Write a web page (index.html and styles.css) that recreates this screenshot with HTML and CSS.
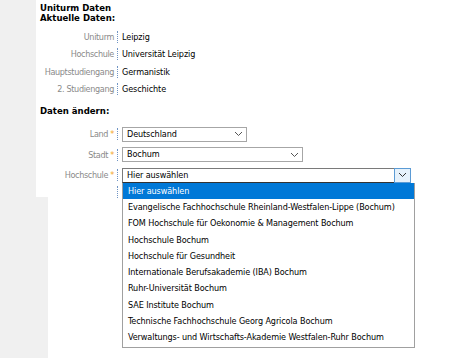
FILE: index.html
```html
<!DOCTYPE html>
<html lang="de">
<head>
<meta charset="utf-8">
<link rel="stylesheet" href="styles.css">
</head>
<body>
<div class="top">
  <div class="side"></div>
  <div class="content">
    <div class="h">Uniturm Daten</div>
    <div class="h">Aktuelle Daten:</div>
    <div class="info">
      <div class="row"><span class="lbl">Uniturm</span><span class="sep"></span><span class="val">Leipzig</span></div>
      <div class="row"><span class="lbl">Hochschule</span><span class="sep"></span><span class="val">Universität Leipzig</span></div>
      <div class="row"><span class="lbl">Hauptstudiengang</span><span class="sep"></span><span class="val">Germanistik</span></div>
      <div class="row"><span class="lbl">2. Studiengang</span><span class="sep"></span><span class="val">Geschichte</span></div>
    </div>
    <div class="h h2">Daten ändern:</div>
    <div class="form">
      <div class="frow"><span class="lbl">Land <i>*</i></span><span class="sep"></span><span class="sel w1">Deutschland<b class="arr"><svg width="9" height="6" viewBox="0 0 9 6"><path d="M1 1l3.5 3.5L8 1" fill="none" stroke="#555" stroke-width="1"/></svg></b></span></div>
      <div class="frow"><span class="lbl">Stadt <i>*</i></span><span class="sep"></span><span class="sel w2">Bochum<b class="arr"><svg width="9" height="6" viewBox="0 0 9 6"><path d="M1 1l3.5 3.5L8 1" fill="none" stroke="#555" stroke-width="1"/></svg></b></span></div>
      <div class="frow"><span class="lbl">Hochschule <i>*</i></span><span class="sep"></span><span class="sel w3 open">Hier auswählen<b class="arr hot"><svg width="9" height="6" viewBox="0 0 9 6"><path d="M1 1l3.5 3.5L8 1" fill="none" stroke="#333" stroke-width="1"/></svg></b>
        <ul class="list">
          <li class="on">Hier auswählen</li>
          <li>Evangelische Fachhochschule Rheinland-Westfalen-Lippe (Bochum)</li>
          <li>FOM Hochschule für Oekonomie &amp; Management Bochum</li>
          <li>Hochschule Bochum</li>
          <li>Hochschule für Gesundheit</li>
          <li>Internationale Berufsakademie (IBA) Bochum</li>
          <li>Ruhr-Universität Bochum</li>
          <li>SAE Institute Bochum</li>
          <li>Technische Fachhochschule Georg Agricola Bochum</li>
          <li>Verwaltungs- und Wirtschafts-Akademie Westfalen-Ruhr Bochum</li>
        </ul>
      </span></div>
      <div class="frow short"><span class="lbl"></span><span class="sep"></span></div>
    </div>
  </div>
</div>
<div class="bottom">
  <div class="side2"></div>
  <div class="rest"></div>
</div>
</body>
</html>
```
FILE: styles.css
```css
html, body {
  margin: 0;
  padding: 0;
  background: #fff;
}
body {
  font-family: "DejaVu Sans Condensed", "DejaVu Sans", sans-serif;
  font-size: 9px;
  letter-spacing: -0.1px;
  color: #000;
  width: 470px;
  height: 358px;
  overflow: hidden;
}
.top {
  display: flex;
  height: 197px;
}
.side {
  width: 36px;
  background: #f0f0f0;
}
.content {
  flex: 1;
  padding: 3px 0 0 4px;
}
.h {
  font-weight: bold;
  font-size: 9.5px;
  letter-spacing: 0;
  line-height: 10px;
  color: #000;
}
.h2 {
  margin-top: 8px;
}
.info {
  margin-top: 5px;
}
.row, .frow {
  display: flex;
  align-items: center;
  height: 17.5px;
}
.frow {
  height: 20.5px;
}
.frow.short {
  height: 12px;
  align-items: flex-start;
}
.lbl {
  width: 74px;
  flex: none;
  text-align: right;
  color: #8a8a8a;
  letter-spacing: -0.35px;
  white-space: nowrap;
}
.lbl i {
  font-style: normal;
  color: #f5a623;
}
.sep {
  width: 0;
  height: 12px;
  border-left: 1px dotted #6f94c4;
  margin: 0 4px 0 3px;
}
.val {
  color: #000;
}
.form {
  margin-top: 8px;
}
.sel {
  position: relative;
  box-sizing: border-box;
  height: 15px;
  border: 1px solid #a6a6a6;
  background: #fff;
  color: #000;
  padding: 0 0 0 4px;
  line-height: 13px;
  display: flex;
  align-items: center;
}
.w1 { width: 125px; }
.w2 { width: 181px; }
.w3 { width: 289px; border-color: #7a7a7a; border-bottom-color: #333; }
.arr {
  margin-left: auto;
  width: 15px;
  height: 13px;
  display: flex;
  align-items: center;
  justify-content: center;
}
.arr.hot {
  border: 1px solid #5b9bd5;
  background: #e5f1fb;
  box-sizing: border-box;
  height: 15px;
  width: 17px;
  margin-right: -1px;
}
.list {
  position: absolute;
  left: -1px;
  top: 14px;
  width: 293px;
  box-sizing: border-box;
  margin: 0;
  padding: 0 0 2px;
  list-style: none;
  background: #fff;
  border: 1px solid #a0a0a0;
  border-top: none;
  z-index: 5;
}
.list li {
  height: 16.25px;
  line-height: 16px;
  padding-left: 5px;
  color: #000;
  white-space: nowrap;
}
.list li.on {
  background: #0078d7;
  color: #fff;
}
.bottom {
  display: flex;
  height: 161px;
}
.side2 {
  width: 48px;
  background: #f0f0f0;
}
.rest {
  flex: 1;
}
```
